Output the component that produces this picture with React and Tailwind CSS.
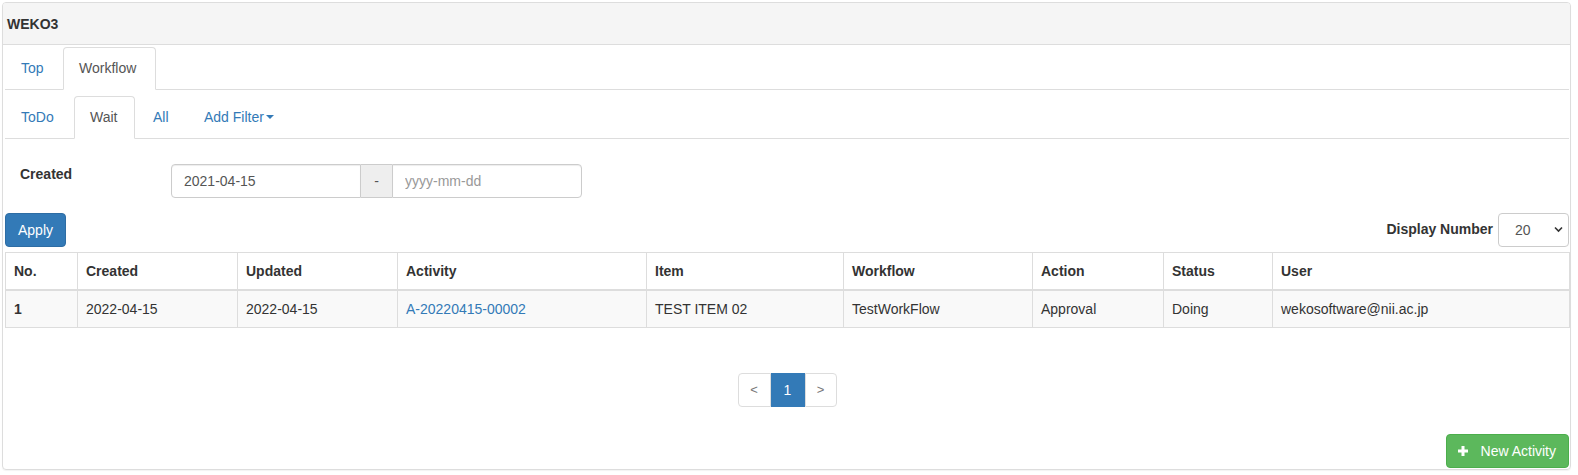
import { useState } from 'react';

const columns = [
  { key: 'no', label: 'No.', width: 'w-[72px]' },
  { key: 'created', label: 'Created', width: 'w-[160px]' },
  { key: 'updated', label: 'Updated', width: 'w-[160px]' },
  { key: 'activity', label: 'Activity', width: 'w-[249px]' },
  { key: 'item', label: 'Item', width: 'w-[197px]' },
  { key: 'workflow', label: 'Workflow', width: 'w-[189px]' },
  { key: 'action', label: 'Action', width: 'w-[131px]' },
  { key: 'status', label: 'Status', width: 'w-[109px]' },
  { key: 'user', label: 'User', width: 'w-[297px]' },
];

const activities = [
  {
    no: 1,
    created: '2022-04-15',
    updated: '2022-04-15',
    activity: 'A-20220415-00002',
    item: 'TEST ITEM 02',
    workflow: 'TestWorkFlow',
    action: 'Approval',
    status: 'Doing',
    user: 'wekosoftware@nii.ac.jp',
  },
];

function Tabs({ items, active, onSelect, className }) {
  return (
    <ul className={`flex border-b border-[#ddd] ${className}`}>
      {items.map(tab => (
        <li key={tab.label} className="-mb-px mr-[2px]">
          <a
            href="#"
            onClick={e => { e.preventDefault(); onSelect(tab.label); }}
            className={`${tab.width} flex items-center pl-[15px] pt-[10px] pb-[11px] leading-5 border rounded-t-[4px] ${
              active === tab.label
                ? 'bg-white text-[#555] border-[#ddd] border-b-transparent'
                : 'text-[#337ab7] border-transparent'
            }`}
          >
            {tab.label}
            {tab.caret && (
              <span className="ml-[2px] inline-block w-0 h-0 border-t-[4px] border-t-[#337ab7] border-x-[4px] border-x-transparent" />
            )}
          </a>
        </li>
      ))}
    </ul>
  );
}

export default function App() {
  const [mainTab, setMainTab] = useState('Workflow');
  const [subTab, setSubTab] = useState('Wait');
  const [fromDate, setFromDate] = useState('2021-04-15');
  const [toDate, setToDate] = useState('');
  const [size, setSize] = useState('20');

  return (
    <div className="bg-white w-[1578px] h-[475px] pt-[2px] pl-[2px] font-['Liberation_Sans',Arial,sans-serif] text-[14px] leading-5 text-[#333]">
      <div className="w-[1569px] border border-[#ddd] rounded-[4px] shadow-[0_1px_1px_rgba(0,0,0,0.05)]">
        {/* Panel heading */}
        <div className="h-[42px] bg-[#f5f5f5] border-b border-[#ddd] rounded-t-[3px] flex items-center pl-[4px]">
          <span className="font-bold text-[14px]">WEKO3</span>
        </div>

        <div className="pl-[2px] pr-[1px] pb-[1px]">
          <Tabs
            className="pt-[2px]"
            items={[
              { label: 'Top', width: 'w-[56px]' },
              { label: 'Workflow', width: 'w-[93px]' },
            ]}
            active={mainTab}
            onSelect={setMainTab}
          />
          <Tabs
            className="pt-[6px]"
            items={[
              { label: 'ToDo', width: 'w-[67px]' },
              { label: 'Wait', width: 'w-[61px]' },
              { label: 'All', width: 'w-[49px]' },
              { label: 'Add Filter', caret: true, width: 'w-[104px]' },
            ]}
            active={subTab}
            onSelect={setSubTab}
          />

          {/* Filter */}
          <div className="flex items-start mt-[25px]">
            <label className="w-[166px] pl-[15px] font-bold">Created</label>
            <div className="flex h-[34px]">
              <input
                value={fromDate}
                onChange={e => setFromDate(e.target.value)}
                className="w-[190px] h-[34px] px-[12px] border border-[#ccc] rounded-l-[4px] text-[#555] shadow-[inset_0_1px_1px_rgba(0,0,0,0.075)] outline-none"
              />
              <span className="w-[31px] h-[34px] flex items-center justify-center bg-[#eee] border-y border-[#ccc] text-[#555]">-</span>
              <input
                value={toDate}
                placeholder="yyyy-mm-dd"
                onChange={e => setToDate(e.target.value)}
                className="w-[190px] h-[34px] px-[12px] border border-[#ccc] rounded-r-[4px] text-[#555] placeholder:text-[#999] shadow-[inset_0_1px_1px_rgba(0,0,0,0.075)] outline-none"
              />
            </div>
          </div>

          {/* Apply + display number */}
          <div className="flex items-center justify-between mt-[15px]">
            <button className="h-[34px] px-[12px] bg-[#337ab7] border border-[#2e6da4] rounded-[4px] text-white">
              Apply
            </button>
            <div className="flex items-center">
              <span className="font-bold mr-[5px] -mt-[3px]">Display Number</span>
              <div className="relative">
                <select
                  value={size}
                  onChange={e => setSize(e.target.value)}
                  className="appearance-none w-[71px] h-[34px] pl-[16px] border border-[#ccc] rounded-[4px] text-[#555] bg-white outline-none"
                >
                  <option>20</option>
                  <option>50</option>
                  <option>100</option>
                </select>
                <svg className="absolute right-[6px] top-[13px] pointer-events-none" width="9" height="7" viewBox="0 0 9 7">
                  <path d="M1 1.5 L4.5 5 L8 1.5" fill="none" stroke="#333" strokeWidth="1.6" />
                </svg>
              </div>
            </div>
          </div>

          {/* Activity table */}
          <table className="table-fixed w-[1564px] border-collapse border border-[#ddd] mt-[5px]">
            <thead>
              <tr>
                {columns.map(col => (
                  <th key={col.key} className={`${col.width} text-left font-bold p-[8px] border border-[#ddd] border-b-2`}>
                    {col.label}
                  </th>
                ))}
              </tr>
            </thead>
            <tbody>
              {activities.map(row => (
                <tr key={row.activity} className="bg-[#f9f9f9]">
                  {columns.map(col => (
                    <td key={col.key} className="p-[8px] border border-[#ddd]">
                      {col.key === 'activity' ? (
                        <a href="#" className="text-[#337ab7]">{row.activity}</a>
                      ) : col.key === 'no' ? (
                        <span className="font-bold">{row.no}</span>
                      ) : (
                        row[col.key]
                      )}
                    </td>
                  ))}
                </tr>
              ))}
            </tbody>
          </table>

          {/* Pagination */}
          <div className="flex justify-center mt-[45px]">
            <ul className="flex h-[34px]">
              <li className="w-[33px] flex items-center justify-center border border-[#ddd] rounded-l-[4px] text-[#777] text-[13px]">&lt;</li>
              <li className="w-[34px] flex items-center justify-center bg-[#337ab7] border border-[#337ab7] text-white">1</li>
              <li className="w-[32px] flex items-center justify-center border border-[#ddd] rounded-r-[4px] text-[#777] text-[13px]">&gt;</li>
            </ul>
          </div>

          {/* New activity */}
          <div className="flex justify-end mt-[27px]">
            <button className="h-[34px] pl-[11px] pr-[12px] flex items-center bg-[#5cb85c] border border-[#4cae4c] rounded-[4px] text-white">
              <svg width="10" height="10" viewBox="0 0 10 10" className="mr-[13px]">
                <rect x="3.5" y="0" width="3" height="10" fill="white" />
                <rect x="0" y="3.5" width="10" height="3" fill="white" />
              </svg>
              New Activity
            </button>
          </div>
        </div>
      </div>
    </div>
  );
}
